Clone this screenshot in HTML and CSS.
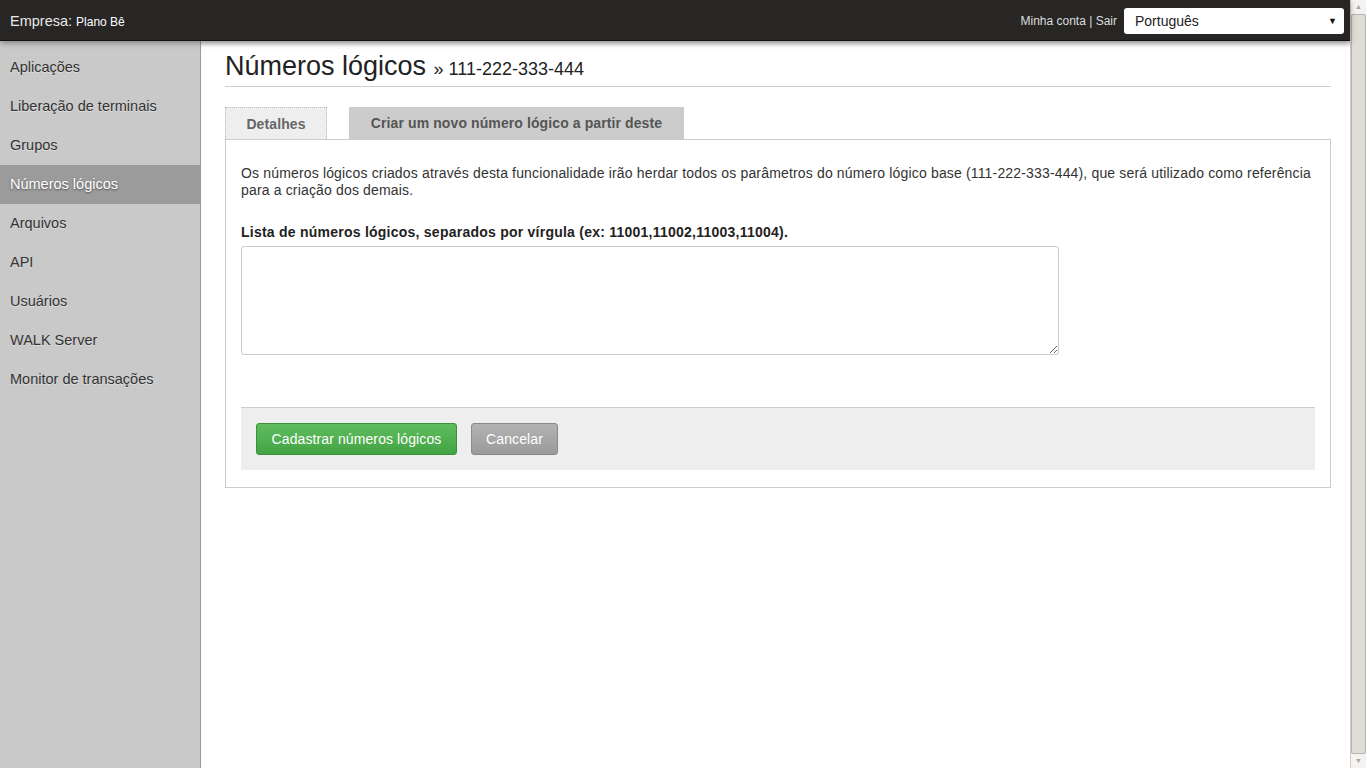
FILE: index.html
```html
<!DOCTYPE html>
<html lang="pt">
<head>
<meta charset="utf-8">
<title>Números lógicos</title>
<link rel="stylesheet" href="styles.css">
</head>
<body>
<div class="page">
  <div class="app">
    <header class="topbar">
      <div class="company">Empresa: <span class="company-name">Plano Bê</span></div>
      <div class="user-area">
        <span class="user-links"><a href="#">Minha conta</a> | <a href="#">Sair</a></span>
        <div class="lang-select"><span>Português</span><span class="caret">▼</span></div>
      </div>
    </header>
    <div class="body-row">
      <nav class="sidebar">
        <a class="nav-item" href="#">Aplicações</a>
        <a class="nav-item" href="#">Liberação de terminais</a>
        <a class="nav-item" href="#">Grupos</a>
        <a class="nav-item active" href="#">Números lógicos</a>
        <a class="nav-item" href="#">Arquivos</a>
        <a class="nav-item" href="#">API</a>
        <a class="nav-item" href="#">Usuários</a>
        <a class="nav-item" href="#">WALK Server</a>
        <a class="nav-item" href="#">Monitor de transações</a>
      </nav>
      <main class="main">
        <h1 class="page-title">Números lógicos <small>» 111-222-333-444</small></h1>
        <div class="tabs">
          <a class="tab" href="#">Detalhes</a>
          <a class="tab current" href="#">Criar um novo número lógico a partir deste</a>
        </div>
        <div class="panel">
          <p class="intro">Os números lógicos criados através desta funcionalidade irão herdar todos os parâmetros do número lógico base (111-222-333-444), que será utilizado como referência para a criação dos demais.</p>
          <label class="field-label" for="numeros">Lista de números lógicos, separados por vírgula (ex: 11001,11002,11003,11004).</label>
          <textarea id="numeros" class="field"></textarea>
          <div class="actions">
            <button class="btn btn-green">Cadastrar números lógicos</button>
            <button class="btn btn-gray">Cancelar</button>
          </div>
        </div>
      </main>
    </div>
  </div>
  <div class="scrollbar">
    <div class="sb-arrow up">▲</div>
    <div class="sb-thumb"></div>
    <div class="sb-arrow down">▼</div>
  </div>
</div>
</body>
</html>
```

FILE: styles.css
```css
* { box-sizing: border-box; }
html, body { margin: 0; padding: 0; height: 100%; overflow: hidden; }
body {
  font-family: "Liberation Sans", Arial, sans-serif;
  color: #333;
  background: #fff;
}
a { text-decoration: none; color: inherit; }

.page { display: flex; height: 768px; }
.app { flex: 1; display: flex; flex-direction: column; min-width: 0; }

.topbar {
  height: 41px;
  background: #272625;
  border-bottom: 1px solid #111;
  display: flex;
  align-items: center;
  justify-content: space-between;
  padding: 1px 6px 0 10px;
  position: relative;
  z-index: 2;
  box-shadow: 0 2px 6px rgba(0,0,0,0.35);
}
.company { color: #e8e8e8; font-size: 14.5px; }
.company-name { font-size: 12px; color: #fff; }
.user-area { display: flex; align-items: center; gap: 7px; }
.user-links { color: #ddd; font-size: 12px; }
.lang-select {
  width: 220px;
  height: 26px;
  background: #fff;
  border-radius: 3px;
  display: flex;
  align-items: center;
  justify-content: space-between;
  padding: 0 7px 0 11px;
  font-size: 14px;
  color: #222;
}
.caret { font-size: 9px; color: #111; }

.body-row { flex: 1; display: flex; min-height: 0; }

.sidebar {
  width: 201px;
  background: #c9c9c9;
  border-right: 1px solid #9a9a9a;
  padding-top: 7px;
  display: flex;
  flex-direction: column;
}
.nav-item {
  height: 39px;
  line-height: 39px;
  padding-left: 10px;
  font-size: 14.5px;
  color: #333;
  text-shadow: 0 1px 0 rgba(255,255,255,0.4);
}
.nav-item.active {
  background: #9b9b9b;
  color: #fff;
  text-shadow: 0 1px 2px rgba(0,0,0,0.5);
}

.main {
  flex: 1;
  padding: 0 19px 0 24px;
  background: linear-gradient(#d8d8d8, #fff 6px);
}
.page-title {
  margin: 0;
  padding: 9px 0 3px;
  font-weight: normal;
  font-size: 27px;
  color: #222;
  border-bottom: 1px solid #cfcfcf;
  line-height: 32px;
  height: 46px;
}
.page-title small { font-size: 18px; color: #222; }

.tabs { display: flex; gap: 22px; margin-top: 20px; height: 32px; }
.tab {
  display: flex;
  align-items: center;
  justify-content: center;
  font-weight: bold;
  font-size: 14px;
  letter-spacing: 0.1px;
  color: #666;
  background: #eee;
  border: 1px dotted #bbb;
  border-bottom: none;
  padding: 0 20px;
  width: 102px;
}
.tab.current {
  background: #ccc;
  border: none;
  color: #555;
  width: 335px;
}

.panel {
  border: 1px solid #ccc;
  padding: 15px 15px 17px;
}
.intro {
  margin: 10px 0 0;
  font-size: 14px;
  letter-spacing: 0.16px;
  line-height: 17px;
  color: #333;
}
.field-label {
  display: block;
  margin-top: 25px;
  font-weight: bold;
  font-size: 14px;
  letter-spacing: 0.24px;
  color: #222;
}
.field {
  display: block;
  width: 818px;
  height: 109px;
  margin-top: 6px;
  border: 1px solid #ccc;
  border-radius: 3px;
  resize: vertical;
  font: inherit;
}
.actions {
  margin-top: 52px;
  background: #eee;
  border-top: 1px solid #ccc;
  padding: 15px 15px;
  display: flex;
  gap: 14px;
}
.btn {
  height: 32px;
  border-radius: 3px;
  font-family: "Liberation Sans", Arial, sans-serif;
  font-size: 14px;
  letter-spacing: 0.1px;
  color: #fff;
  padding: 0 10px;
  cursor: pointer;
}
.btn-green {
  width: 201px;
  background: linear-gradient(#5fbd5f, #43a343);
  border: 1px solid #3a913a;
}
.btn-gray {
  width: 87px;
  background: linear-gradient(#b3b3b3, #9a9a9a);
  border: 1px solid #8a8a8a;
}

.scrollbar {
  width: 16px;
  background: #e9e6e1;
  border-left: 1px solid #d0ccc6;
  display: flex;
  flex-direction: column;
}
.sb-arrow {
  height: 14px;
  font-size: 7px;
  color: #a8a4a0;
  text-align: center;
  line-height: 14px;
  background: #f5f3f0;
}
.sb-thumb {
  flex: 1;
  background: #e0dcd6;
  border: 1px solid #b7b3ae;
  border-radius: 2px;
}
```
